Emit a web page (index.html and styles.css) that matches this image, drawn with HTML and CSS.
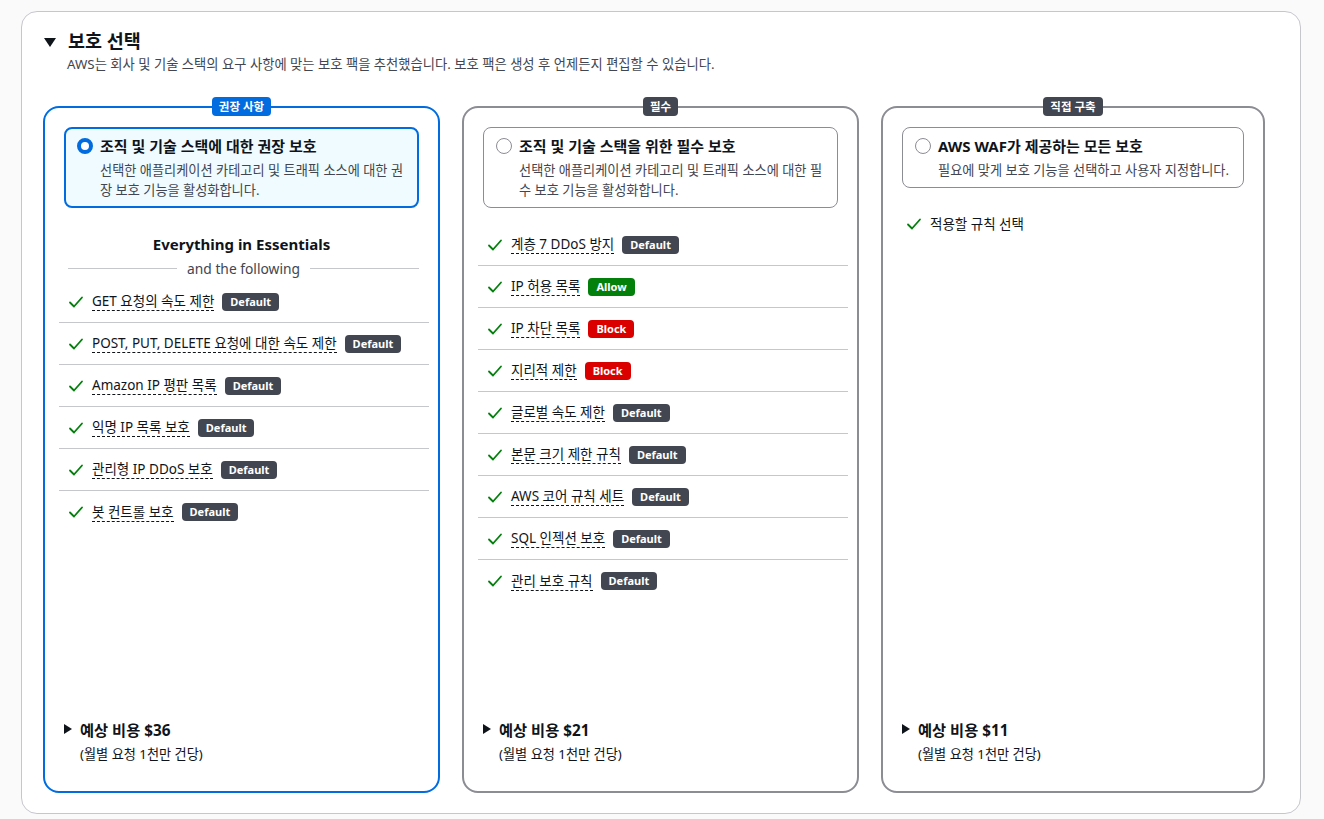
FILE: index.html
```html
<!DOCTYPE html>
<html lang="ko">
<head>
<meta charset="utf-8">
<link rel="stylesheet" href="styles.css">
</head>
<body>
<div class="panel">
  <div class="head">
    <span class="caret-down"></span>
    <h2 class="title">보호 선택</h2>
  </div>
  <p class="lead">AWS는 회사 및 기술 스택의 요구 사항에 맞는 보호 팩을 추천했습니다. 보호 팩은 생성 후 언제든지 편집할 수 있습니다.</p>

  <div class="cards">
    <!-- Card 1 -->
    <div class="card card-selected">
      <span class="tag tag-blue">권장 사항</span>
      <div class="tile tile-selected">
        <div class="tile-row">
          <span class="radio radio-on"></span>
          <div class="tile-text">
            <div class="tile-title">조직 및 기술 스택에 대한 권장 보호</div>
            <div class="tile-desc">선택한 애플리케이션 카테고리 및 트래픽 소스에 대한 권장 보호 기능을 활성화합니다.</div>
          </div>
        </div>
      </div>
      <div class="essentials">Everything in Essentials</div>
      <div class="following"><span class="rule"></span><span class="following-text">and the following</span><span class="rule"></span></div>
      <ul class="list list-first">
        <li class="item"><svg class="check" viewBox="0 0 16 16"><path d="M2 8.5 L6 12.5 L14 3.5"/></svg><span class="label">GET 요청의 속도 제한</span><span class="badge badge-default">Default</span></li>
        <li class="item"><svg class="check" viewBox="0 0 16 16"><path d="M2 8.5 L6 12.5 L14 3.5"/></svg><span class="label">POST, PUT, DELETE 요청에 대한 속도 제한</span><span class="badge badge-default">Default</span></li>
        <li class="item"><svg class="check" viewBox="0 0 16 16"><path d="M2 8.5 L6 12.5 L14 3.5"/></svg><span class="label">Amazon IP 평판 목록</span><span class="badge badge-default">Default</span></li>
        <li class="item"><svg class="check" viewBox="0 0 16 16"><path d="M2 8.5 L6 12.5 L14 3.5"/></svg><span class="label">익명 IP 목록 보호</span><span class="badge badge-default">Default</span></li>
        <li class="item"><svg class="check" viewBox="0 0 16 16"><path d="M2 8.5 L6 12.5 L14 3.5"/></svg><span class="label">관리형 IP DDoS 보호</span><span class="badge badge-default">Default</span></li>
        <li class="item"><svg class="check" viewBox="0 0 16 16"><path d="M2 8.5 L6 12.5 L14 3.5"/></svg><span class="label">봇 컨트롤 보호</span><span class="badge badge-default">Default</span></li>
      </ul>
      <div class="cost">
        <div class="cost-line"><span class="caret-right"></span><span class="cost-title">예상 비용 $36</span></div>
        <div class="cost-sub">(월별 요청 1천만 건당)</div>
      </div>
    </div>

    <!-- Card 2 -->
    <div class="card">
      <span class="tag tag-gray">필수</span>
      <div class="tile">
        <div class="tile-row">
          <span class="radio"></span>
          <div class="tile-text">
            <div class="tile-title">조직 및 기술 스택을 위한 필수 보호</div>
            <div class="tile-desc">선택한 애플리케이션 카테고리 및 트래픽 소스에 대한 필수 보호 기능을 활성화합니다.</div>
          </div>
        </div>
      </div>
      <ul class="list">
        <li class="item"><svg class="check" viewBox="0 0 16 16"><path d="M2 8.5 L6 12.5 L14 3.5"/></svg><span class="label">계층 7 DDoS 방지</span><span class="badge badge-default">Default</span></li>
        <li class="item"><svg class="check" viewBox="0 0 16 16"><path d="M2 8.5 L6 12.5 L14 3.5"/></svg><span class="label">IP 허용 목록</span><span class="badge badge-allow">Allow</span></li>
        <li class="item"><svg class="check" viewBox="0 0 16 16"><path d="M2 8.5 L6 12.5 L14 3.5"/></svg><span class="label">IP 차단 목록</span><span class="badge badge-block">Block</span></li>
        <li class="item"><svg class="check" viewBox="0 0 16 16"><path d="M2 8.5 L6 12.5 L14 3.5"/></svg><span class="label">지리적 제한</span><span class="badge badge-block">Block</span></li>
        <li class="item"><svg class="check" viewBox="0 0 16 16"><path d="M2 8.5 L6 12.5 L14 3.5"/></svg><span class="label">글로벌 속도 제한</span><span class="badge badge-default">Default</span></li>
        <li class="item"><svg class="check" viewBox="0 0 16 16"><path d="M2 8.5 L6 12.5 L14 3.5"/></svg><span class="label">본문 크기 제한 규칙</span><span class="badge badge-default">Default</span></li>
        <li class="item"><svg class="check" viewBox="0 0 16 16"><path d="M2 8.5 L6 12.5 L14 3.5"/></svg><span class="label">AWS 코어 규칙 세트</span><span class="badge badge-default">Default</span></li>
        <li class="item"><svg class="check" viewBox="0 0 16 16"><path d="M2 8.5 L6 12.5 L14 3.5"/></svg><span class="label">SQL 인젝션 보호</span><span class="badge badge-default">Default</span></li>
        <li class="item"><svg class="check" viewBox="0 0 16 16"><path d="M2 8.5 L6 12.5 L14 3.5"/></svg><span class="label">관리 보호 규칙</span><span class="badge badge-default">Default</span></li>
      </ul>
      <div class="cost">
        <div class="cost-line"><span class="caret-right"></span><span class="cost-title">예상 비용 $21</span></div>
        <div class="cost-sub">(월별 요청 1천만 건당)</div>
      </div>
    </div>

    <!-- Card 3 -->
    <div class="card">
      <span class="tag tag-gray">직접 구축</span>
      <div class="tile">
        <div class="tile-row">
          <span class="radio"></span>
          <div class="tile-text">
            <div class="tile-title">AWS WAF가 제공하는 모든 보호</div>
            <div class="tile-desc">필요에 맞게 보호 기능을 선택하고 사용자 지정합니다.</div>
          </div>
        </div>
      </div>
      <ul class="list list-third">
        <li class="item item-plain"><svg class="check" viewBox="0 0 16 16"><path d="M2 8.5 L6 12.5 L14 3.5"/></svg><span class="label-plain">적용할 규칙 선택</span></li>
      </ul>
      <div class="cost">
        <div class="cost-line"><span class="caret-right"></span><span class="cost-title">예상 비용 $11</span></div>
        <div class="cost-sub">(월별 요청 1천만 건당)</div>
      </div>
    </div>
  </div>
</div>
</body>
</html>
```

FILE: styles.css
```css
* { box-sizing: border-box; }

html, body {
  margin: 0;
  padding: 0;
  background: #fafafa;
}

body {
  font-family: "Noto Sans", "Noto Sans CJK KR", sans-serif;
  color: #0f141a;
  padding: 11px 0 0 21px;
}

.panel {
  width: 1280px;
  height: 803px;
  background: #ffffff;
  border: 1px solid #c6c6cd;
  border-radius: 16px;
  padding: 17px 0 0 21px;
}

.head {
  display: flex;
  align-items: center;
  gap: 12px;
  height: 24px;
}

.caret-down {
  width: 0;
  height: 0;
  margin-left: 1px;
  border-left: 6px solid transparent;
  border-right: 6px solid transparent;
  border-top: 9px solid #0f141a;
  margin-top: 2px;
}

.title {
  margin: 0;
  font-size: 18.5px;
  font-weight: 700;
  line-height: 24px;
}

.lead {
  margin: 1px 0 0 24px;
  font-size: 13.3px;
  line-height: 20px;
  color: #424650;
}

.cards {
  display: grid;
  grid-template-columns: 397px 397px 384px;
  column-gap: 22px;
  margin-top: 32px;
}

.card {
  height: 687px;
  border: 2px solid #8c8c94;
  border-radius: 16px;
  padding: 0 19px 0 19px;
  display: flex;
  flex-direction: column;
}

.card-selected {
  border-color: #006ce0;
}

.tag {
  align-self: center;
  margin-top: -11px;
  height: 19px;
  line-height: 19px;
  padding: 0 7px;
  border-radius: 4px;
  font-size: 11.5px;
  font-weight: 700;
  color: #ffffff;
}

.tag-blue { background: #006ce0; }
.tag-gray { background: #424650; }

.tile {
  margin-top: 11px;
  border: 1px solid #8c8c94;
  border-radius: 8px;
  padding: 7px 6px 7px 12px;
}

.tile-selected {
  border: 2px solid #006ce0;
  background: #f0fbff;
  padding: 6px 5px 6px 11px;
}

.tile-row {
  display: flex;
  gap: 7px;
}

.radio {
  flex: none;
  width: 16px;
  height: 16px;
  margin-top: 3px;
  border-radius: 50%;
  border: 1.5px solid #8c8c94;
  background: #ffffff;
}

.radio-on {
  border: 4.5px solid #006ce0;
}

.tile-title {
  font-size: 15px;
  font-weight: 700;
  line-height: 22px;
}

.tile-desc {
  margin-top: 3px;
  font-size: 13.2px;
  line-height: 20px;
  color: #424650;
}

.essentials {
  margin-top: 25px;
  text-align: center;
  font-size: 15px;
  font-weight: 700;
  line-height: 22px;
}

.following {
  display: flex;
  align-items: center;
  gap: 10px;
  margin: 3px 0 0 4px;
  height: 20px;
}

.rule {
  flex: 1;
  height: 1px;
  background: #c6c6cd;
}

.following-text {
  font-size: 13.8px;
  color: #424650;
}

.list {
  list-style: none;
  margin: 16px -10px 0 -5px;
  padding: 0;
}

.list-first {
  margin-top: 3px;
}

.list-third {
  margin-top: 15px;
}

.item {
  display: flex;
  align-items: center;
  height: 42px;
  padding-left: 9px;
  border-bottom: 1px solid #c6c6cd;
}

.item:last-child {
  border-bottom: none;
}

.check {
  flex: none;
  width: 16px;
  height: 16px;
  margin-right: 8px;
  fill: none;
  stroke: #037f0c;
  stroke-width: 1.8;
  stroke-linecap: round;
  stroke-linejoin: round;
}

.label {
  font-size: 13.5px;
  line-height: 18px;
  border-bottom: 1px dashed #0f141a;
}

.label-plain {
  font-size: 13.5px;
  line-height: 18px;
}

.badge {
  margin-left: 8px;
  height: 18px;
  line-height: 18px;
  padding: 0 8px;
  border-radius: 4px;
  font-size: 11px;
  font-weight: 700;
  color: #ffffff;
}

.badge-default { background: #424650; }
.badge-allow { background: #037f0c; }
.badge-block { background: #db0000; }

.cost {
  margin-top: auto;
  margin-bottom: 27px;
}

.cost-line {
  display: flex;
  align-items: center;
  gap: 8px;
  height: 22px;
}

.caret-right {
  width: 0;
  height: 0;
  border-top: 5px solid transparent;
  border-bottom: 5px solid transparent;
  border-left: 8px solid #0f141a;
}

.cost-title {
  font-size: 15.3px;
  font-weight: 700;
}

.cost-sub {
  margin-left: 16px;
  margin-top: 4px;
  font-size: 13.2px;
  line-height: 20px;
}
```
